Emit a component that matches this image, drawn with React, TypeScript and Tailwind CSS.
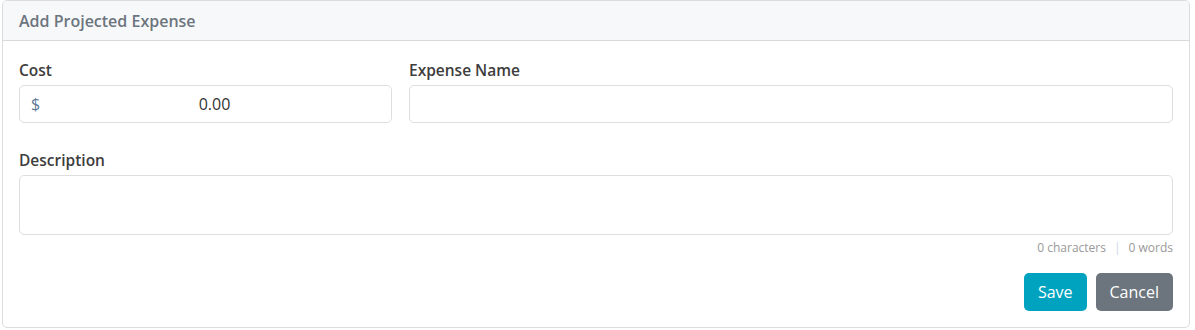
export default function App() {
  return (
    <div className="w-[1195px] h-[330px] bg-white font-['Open_Sans','Noto_Sans',sans-serif]">
      <div className="ml-[2px] w-[1188px] h-[328px] border border-[#dcdcdc] rounded-[5px] overflow-hidden flex flex-col">
        <div className="h-[40px] bg-[#f7f8fa] border-b border-[#d6d8db] px-[16px] flex items-center">
          <span className="text-[16px] font-semibold text-[#6c757d]">Add Projected Expense</span>
        </div>
        <div className="px-[16px] pt-[19px] flex flex-col">
          <div className="flex gap-[17px]">
            <div className="w-[373px] flex flex-col">
              <label className="text-[15.5px] font-semibold text-[#3d3d3d] leading-[20px]">Cost</label>
              <div className="mt-[5px] h-[38px] border border-[#dedede] rounded-[5px] flex items-center">
                <span className="pl-[11px] w-[40px] text-[16px] text-[#5e7a99]">$</span>
                <input
                  className="flex-1 min-w-0 h-full outline-none text-center text-[16px] text-[#333] pr-[22px] bg-transparent"
                  defaultValue="0.00"
                />
              </div>
            </div>
            <div className="flex-1 flex flex-col">
              <label className="text-[15.5px] font-semibold text-[#3d3d3d] leading-[20px]">Expense Name</label>
              <input className="mt-[5px] h-[38px] border border-[#dedede] rounded-[5px] outline-none px-3" />
            </div>
          </div>
          <label className="mt-[27px] text-[15.5px] font-semibold text-[#3d3d3d] leading-[20px]">Description</label>
          <textarea className="mt-[5px] h-[60px] border border-[#dedede] rounded-[5px] outline-none resize-none px-3 py-2" />
          <div className="mt-[5px] flex justify-end items-center gap-[8px] text-[12px] text-[#999] leading-[16px]">
            <span>0 characters</span>
            <span className="text-[#c9d6e6]">|</span>
            <span>0 words</span>
          </div>
          <div className="mt-[17px] flex justify-end gap-[9px]">
            <button className="h-[38px] px-[14px] rounded-[5px] bg-[#00a3bf] text-white text-[16px]">Save</button>
            <button className="h-[38px] px-[14px] rounded-[5px] bg-[#6c757d] text-white text-[16px]">Cancel</button>
          </div>
        </div>
      </div>
    </div>
  );
}
